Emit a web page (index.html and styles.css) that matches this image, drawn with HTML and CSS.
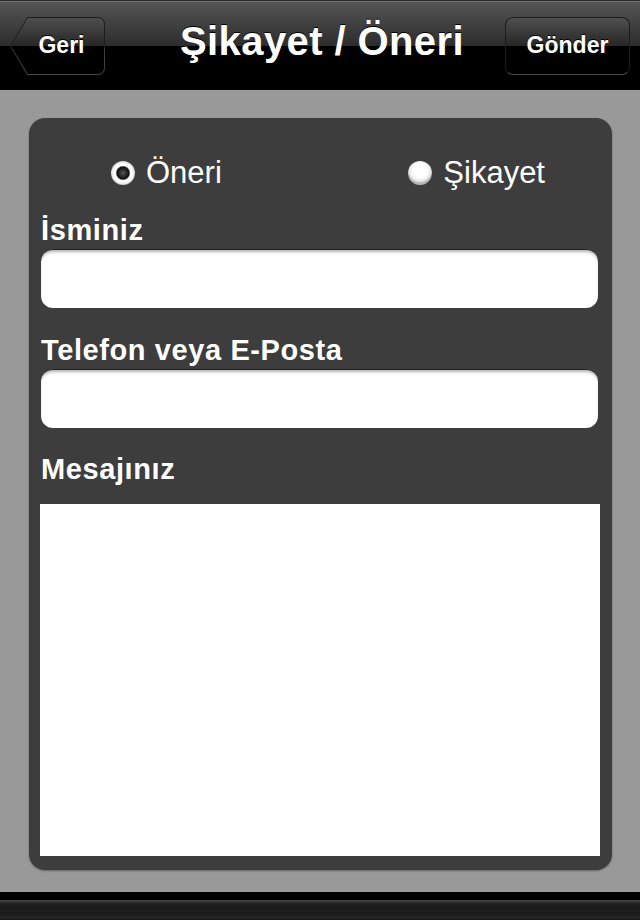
FILE: index.html
```html
<!DOCTYPE html>
<html lang="tr">
<head>
  <meta charset="UTF-8" />
  <meta name="viewport" content="width=device-width, initial-scale=1.0" />
  <title>Şikayet / Öneri</title>
  <link rel="stylesheet" href="styles.css">
</head>
<body>
  <header class="navbar">
    <button type="button" class="back-btn">
      <svg class="back-shape" width="95" height="58" viewBox="0 0 95 58">
        <defs>
          <linearGradient id="backFill" x1="0" y1="0" x2="0" y2="1">
            <stop offset="0" stop-color="#4f4f4f" />
            <stop offset="0.5" stop-color="#262626" />
            <stop offset="0.5" stop-color="#000" />
            <stop offset="1" stop-color="#000" />
          </linearGradient>
          <linearGradient id="backStroke" x1="0" y1="0" x2="0" y2="1">
            <stop offset="0" stop-color="#1a1a1a" />
            <stop offset="0.5" stop-color="#202020" />
            <stop offset="0.55" stop-color="#3a3a3a" />
            <stop offset="1" stop-color="#4a4a4a" />
          </linearGradient>
        </defs>
        <path d="M17.5 0.5 H87.5 Q94.5 0.5 94.5 7.5 V50.5 Q94.5 57.5 87.5 57.5 H17.5 L0.5 29 Z"
              fill="url(#backFill)" stroke="url(#backStroke)" stroke-width="1" />
      </svg>
      <span class="btn-text">Geri</span>
    </button>
    <h1 class="title">Şikayet / Öneri</h1>
    <button type="button" class="send-btn">Gönder</button>
  </header>

  <main class="content">
    <form class="card">
      <div class="choice-row">
        <label class="choice"><input type="radio" name="tip" value="oneri" checked> Öneri</label>
        <label class="choice"><input type="radio" name="tip" value="sikayet"> Şikayet</label>
      </div>

      <label class="field-label" for="isim">İsminiz</label>
      <input class="text-input" type="text" id="isim">

      <label class="field-label" for="iletisim">Telefon veya E-Posta</label>
      <input class="text-input" type="text" id="iletisim">

      <label class="field-label label-message" for="mesaj">Mesajınız</label>
      <textarea class="message" id="mesaj"></textarea>
    </form>
  </main>

  <footer class="toolbar"></footer>
</body>
</html>
```

FILE: styles.css
```css
html, body {
  margin: 0;
  padding: 0;
}

body {
  font-family: 'Liberation Sans', Arial, sans-serif;
  background-color: #999999;
  color: #fff;
}

.navbar {
  height: 90px;
  box-sizing: border-box;
  display: grid;
  grid-template-columns: 1fr auto 1fr;
  align-items: center;
  padding: 0 10px;
  border-top: 1px solid #2a2a2a;
  background:
    linear-gradient(to bottom, #70757e 0, #70757e 1px, transparent 1px),
    linear-gradient(to bottom, #545454 2px, #2c2c2c 45px, #000 45px, #000 100%);
}

.title {
  margin: 0 0 8px 4px;
  font-size: 40px;
  font-weight: bold;
  letter-spacing: 0.4px;
  text-shadow: 0 -1px 0 #000;
  white-space: nowrap;
}

.back-btn,
.send-btn {
  font-family: inherit;
  font-size: 23px;
  font-weight: bold;
  color: #fff;
  text-shadow: 0 -1px 0 #000;
  cursor: pointer;
  height: 58px;
}

.back-btn {
  justify-self: start;
  position: relative;
  width: 95px;
  padding: 0 0 0 8px;
  border: none;
  background: none;
}

.back-shape {
  position: absolute;
  left: 0;
  top: 0;
}

.btn-text {
  position: relative;
}

.send-btn {
  justify-self: end;
  width: 125px;
  padding: 0;
  border: 1px solid #1c1c1c;
  border-bottom-color: #4a4a4a;
  border-radius: 8px;
  background: linear-gradient(to bottom, #4f4f4f 0, #262626 50%, #000 50%, #000 100%);
}

.content {
  padding: 28px 28px 22px 29px;
}

.card {
  background-color: #3d3d3d;
  border-radius: 16px;
  padding: 38px 12px 14px 11px;
  box-shadow: 0 1px 2px rgba(0, 0, 0, 0.35);
}

.choice-row {
  display: flex;
  justify-content: space-between;
  align-items: center;
  height: 34px;
  padding: 0 55px 0 71px;
  margin-bottom: 25px;
}

.choice {
  display: flex;
  align-items: center;
  gap: 11px;
  font-size: 31px;
  cursor: pointer;
}

.choice input {
  appearance: none;
  -webkit-appearance: none;
  margin: 0;
  width: 24px;
  height: 24px;
  border-radius: 50%;
  background: radial-gradient(circle at 50% 40%, #ffffff 0, #ffffff 7px, #e4e4e4 11px, #b8b8b8 12px);
}

.choice input:checked {
  background: radial-gradient(circle at 50% 50%, #555 0, #1a1a1a 5px, #0c0c0c 6px, #fff 7.5px, #fff 9.5px, #d0d0d0 12px);
}

.field-label {
  display: block;
  font-size: 29px;
  font-weight: bold;
  line-height: 30px;
  letter-spacing: 0.6px;
  padding-left: 1px;
  margin-bottom: 4px;
}

.text-input {
  display: block;
  box-sizing: border-box;
  width: calc(100% - 3px);
  height: 59px;
  margin: 0 2px 27px 1px;
  border: none;
  border-top: 1px solid #222;
  border-radius: 12px;
  background-color: #fff;
  box-shadow: inset 0 3px 3px -1px rgba(0, 0, 0, 0.3);
  font-family: inherit;
  font-size: 26px;
  padding: 0 12px;
}

.label-message {
  margin-top: -1px;
  margin-bottom: 20px;
}

.message {
  display: block;
  box-sizing: border-box;
  width: 100%;
  height: 352px;
  margin: 0;
  border: none;
  border-radius: 0;
  background-color: #fff;
  resize: none;
  font-family: inherit;
  font-size: 24px;
}

.toolbar {
  height: 28px;
  box-sizing: border-box;
  border-top: 8px solid #000;
  background: linear-gradient(to bottom, #3e3e3e 0, #3e3e3e 2px, #2c2c2c 2px, #1c1c1c 5px, #1c1c1c 16px, #2c2c2c 17px, #1c1c1c 19px);
}
```
